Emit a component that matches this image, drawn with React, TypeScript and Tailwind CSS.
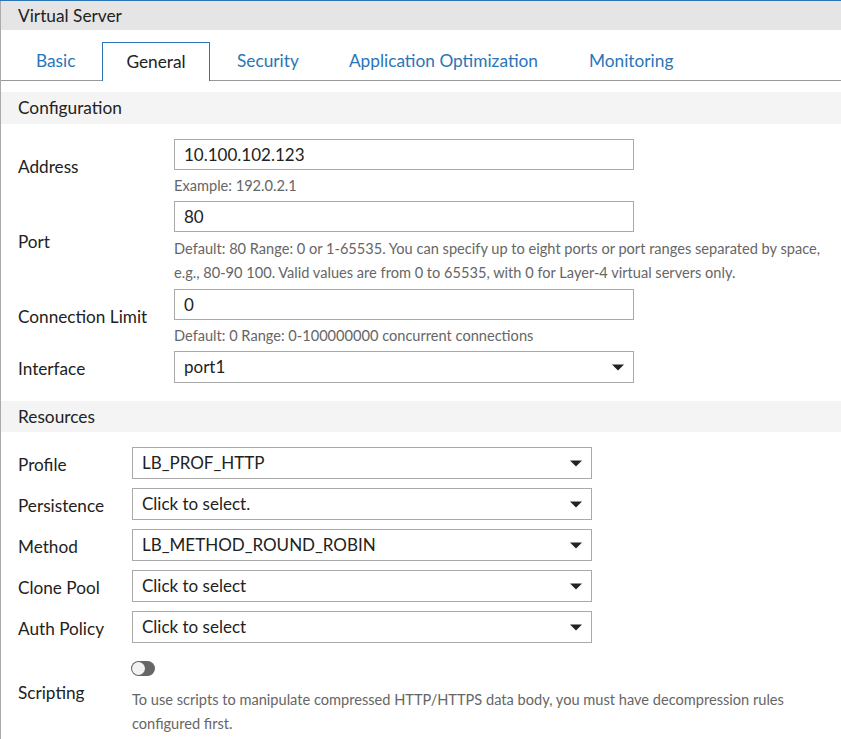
const font = { fontFamily: "Lato, sans-serif" };

function Caret() {
  return (
    <svg width="12" height="7" viewBox="0 0 12 7" className="shrink-0">
      <path d="M0 0.5H12L6 6.5Z" fill="#222" />
    </svg>
  );
}

function TextBox({ value }: { value: string }) {
  return (
    <div className="w-[460px] h-[31px] border border-[#aaa] pl-[9px] flex items-center text-[17px] text-[#222]">
      {value}
    </div>
  );
}

function Select({ value, width = "w-[460px]" }: { value: string; width?: string }) {
  return (
    <div className={`${width} h-[32px] border border-[#aaa] pl-[9px] pr-[9px] flex items-center justify-between text-[17px] text-[#222]`}>
      <span>{value}</span>
      <Caret />
    </div>
  );
}

function Hint({ children, className = "" }: { children: React.ReactNode; className?: string }) {
  return <p className={`text-[14.6px] leading-[24px] text-[#666] ${className}`}>{children}</p>;
}

const tabs = ["Basic", "General", "Security", "Application Optimization", "Monitoring"];

function ResourceRow({ label, value }: { label: string; value: string }) {
  return (
    <div className="flex items-center h-[32px]">
      <div className="w-[131px] shrink-0 pl-[17px] pt-[3px] text-[17.2px] text-[#222]">{label}</div>
      <Select value={value} />
    </div>
  );
}

export default function App() {
  return (
    <div className="w-[841px] h-[739px] overflow-hidden bg-white border-t border-[#2a75b8]" style={font}>
      <div className="h-full border-l border-[#aaa]">
        <div className="h-[29px] bg-[#e5e5e5] pl-[17px] flex items-center text-[17.3px] text-[#222]">
          Virtual Server
        </div>

        {/* tabs */}
        <div className="h-[51px] pt-[12px] flex border-b border-[#999]">
          <div className="w-[101px] h-[38px] pl-[35px] flex items-center text-[17.3px] text-[#2a75b8]">Basic</div>
          {tabs.slice(1).map((t) =>
            t === "General" ? (
              <div
                key={t}
                className="w-[108px] h-[39px] mr-[2px] border border-b-0 border-[#2a75b8] bg-white flex items-center justify-center text-[17.3px] text-[#222]"
              >
                {t}
              </div>
            ) : (
              <div
                key={t}
                className={`h-[38px] px-[25px] flex items-center text-[17.3px] text-[#2a75b8] ${t === "Monitoring" ? "ml-[1px]" : ""}`}
              >
                {t}
              </div>
            )
          )}
        </div>

        <div className="mt-[11px] h-[32px] bg-[#f4f4f4] pl-[17px] flex items-center text-[17.3px] text-[#222]">
          Configuration
        </div>

        <div className="pl-[17px] pt-[15px]">
          <div className="flex">
            <div className="w-[156px] shrink-0 pt-[15px] text-[17.2px] text-[#222]">Address</div>
            <div>
              <TextBox value="10.100.102.123" />
              <Hint className="mt-[4px] mb-[3px]">Example: 192.0.2.1</Hint>
            </div>
          </div>
          <div className="flex">
            <div className="w-[156px] shrink-0 pt-[28px] text-[17.2px] text-[#222]">Port</div>
            <div>
              <TextBox value="80" />
              <Hint className="mt-[5px] w-[660px] mb-[4px]">
                Default: 80 Range: 0 or 1-65535. You can specify up to eight ports or port ranges separated by space, e.g., 80-90 100. Valid values are from 0 to 65535, with 0 for Layer-4 virtual servers only.
              </Hint>
            </div>
          </div>
          <div className="flex">
            <div className="w-[156px] shrink-0 pt-[15px] text-[17.2px] text-[#222]">Connection Limit</div>
            <div>
              <TextBox value="0" />
              <Hint className="mt-[4px] mb-[3px]">Default: 0 Range: 0-100000000 concurrent connections</Hint>
            </div>
          </div>
          <div className="flex items-center">
            <div className="w-[156px] shrink-0 pt-[3px] text-[17.2px] text-[#222]">Interface</div>
            <Select value="port1" />
          </div>
        </div>

        <div className="mt-[18px] h-[31px] bg-[#f4f4f4] pl-[17px] flex items-center text-[17.3px] text-[#222]">
          Resources
        </div>

        <div className="pt-[15px] flex flex-col gap-[9px]">
          <ResourceRow label="Profile" value="LB_PROF_HTTP" />
          <ResourceRow label="Persistence" value="Click to select." />
          <ResourceRow label="Method" value="LB_METHOD_ROUND_ROBIN" />
          <ResourceRow label="Clone Pool" value="Click to select" />
          <ResourceRow label="Auth Policy" value="Click to select" />
        </div>

        <div className="flex pl-[17px] pt-[18px]">
          <div className="w-[113px] shrink-0 pt-[19px] text-[17.2px] text-[#222]">Scripting</div>
          <div>
            <div className="w-[24px] h-[15px] rounded-full bg-[#666] p-[1px]">
              <div className="w-[13px] h-[13px] rounded-full bg-[#f2f2f2]" />
            </div>
            <Hint className="mt-[12px] ml-[1px] w-[690px]">
              To use scripts to manipulate compressed HTTP/HTTPS data body, you must have decompression rules configured first.
            </Hint>
          </div>
        </div>
      </div>
    </div>
  );
}
